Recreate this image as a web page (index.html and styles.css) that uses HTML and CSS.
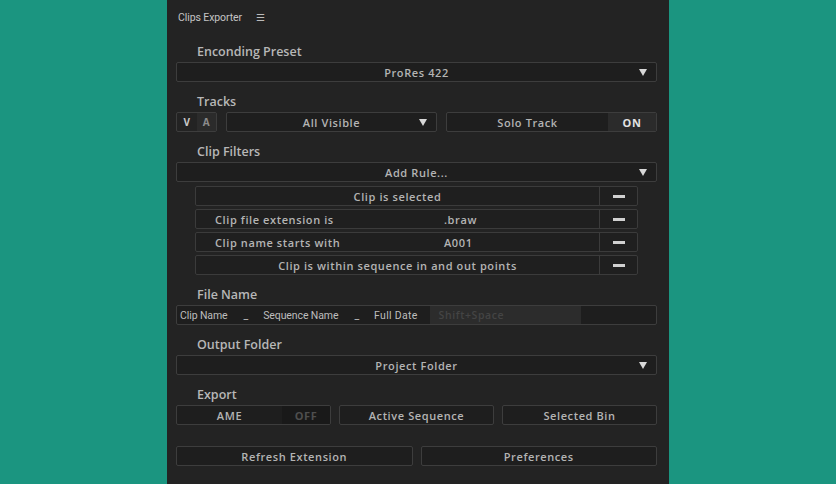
FILE: index.html
```
<!DOCTYPE html>
<html lang="en">
	<head>
		<meta charset="UTF-8" />
		<meta name="viewport" content="width=device-width, initial-scale=1.0" />
		<title>Clips Exporter</title>
		<link rel="stylesheet" href="styles.css">
	</head>
	<body>
		<div class="panel">
			<div class="title-bar">
				<span class="title">Clips Exporter</span>
				<span class="menu">&#9776;</span>
			</div>

			<div class="label">Enconding Preset</div>
			<div class="field select">
				<span class="value">ProRes 422</span>
				<span class="arrow"></span>
			</div>

			<div class="label">Tracks</div>
			<div class="row tracks">
				<div class="va">
					<span class="v">V</span>
					<span class="a">A</span>
				</div>
				<div class="field select visible">
					<span class="value">All Visible</span>
					<span class="arrow"></span>
				</div>
				<div class="field toggle solo">
					<span class="toggle-name">Solo Track</span>
					<span class="toggle-on">ON</span>
				</div>
			</div>

			<div class="label">Clip Filters</div>
			<div class="field select">
				<span class="value">Add Rule...</span>
				<span class="arrow"></span>
			</div>
			<div class="filters">
				<div class="filter">
					<span class="filter-text center">Clip is selected</span>
					<span class="remove"><i></i></span>
				</div>
				<div class="filter">
					<span class="filter-text"><span class="rule">Clip file extension is</span><span class="param">.braw</span></span>
					<span class="remove"><i></i></span>
				</div>
				<div class="filter">
					<span class="filter-text"><span class="rule">Clip name starts with</span><span class="param">A001</span></span>
					<span class="remove"><i></i></span>
				</div>
				<div class="filter">
					<span class="filter-text center">Clip is within sequence in and out points</span>
					<span class="remove"><i></i></span>
				</div>
			</div>

			<div class="label">File Name</div>
			<div class="field filename">
				<span class="token">Clip Name</span>
				<span class="sep">_</span>
				<span class="token">Sequence Name</span>
				<span class="sep">_</span>
				<span class="token last">Full Date</span>
				<span class="hint">Shift+Space</span>
			</div>

			<div class="label">Output Folder</div>
			<div class="field select">
				<span class="value">Project Folder</span>
				<span class="arrow"></span>
			</div>

			<div class="label">Export</div>
			<div class="row thirds">
				<div class="field toggle">
					<span class="toggle-name">AME</span>
					<span class="toggle-off">OFF</span>
				</div>
				<div class="field button">Active Sequence</div>
				<div class="field button">Selected Bin</div>
			</div>

			<div class="row halves">
				<div class="field button">Refresh Extension</div>
				<div class="field button">Preferences</div>
			</div>
		</div>
	</body>
</html>
```

FILE: styles.css
```
body {
	margin: 0;
	background-color: #1b9580; /* teal backdrop */
	font-family: "Open Sans", "DejaVu Sans", sans-serif;
}
.panel {
	width: 481px;
	height: 484px;
	margin-left: 167px;
	padding: 0 12px 0 9px;
	background-color: #232323;
	color: #b4b4b4;
}
.title-bar {
	height: 34px;
	display: flex;
	align-items: center;
	gap: 14px;
	padding-left: 2px;
}
.title {
	font-family: Roboto, sans-serif;
	font-size: 10.5px;
	letter-spacing: -0.1px;
	color: #c4c4c4;
}
.menu {
	font-size: 10px;
	color: #bbb;
}
.label {
	height: 20px;
	line-height: 20px;
	margin-top: 10px;
	padding-left: 21px;
	font-size: 12.5px;
	font-weight: 600;
	color: #b7b7b7;
}
.title-bar + .label {
	margin-top: 8px;
}
.field {
	box-sizing: border-box;
	height: 20px;
	border: 1px solid #3d3d3d;
	border-radius: 2px;
	background-color: #1e1e1e;
	font-size: 11px;
	font-weight: 600;
	letter-spacing: 0.6px;
	color: #b4b4b4;
	display: flex;
	align-items: center;
}
.select {
	position: relative;
	justify-content: center;
}
.arrow {
	position: absolute;
	right: 9px;
	top: 6px;
	width: 0;
	height: 0;
	border-left: 4px solid transparent;
	border-right: 4px solid transparent;
	border-top: 7px solid #d8d8d8;
}
.row {
	display: flex;
	gap: 8px;
}
.tracks {
	gap: 0;
}
.va {
	box-sizing: border-box;
	width: 41px;
	height: 20px;
	display: flex;
	border: 1px solid #3d3d3d;
	border-radius: 2px;
	font-size: 10px;
	font-weight: 700;
	color: #c9c9c9;
}
.va span {
	flex: 1;
	display: flex;
	align-items: center;
	justify-content: center;
}
.va .a {
	background-color: #2b2b2b;
	color: #8c8c8c;
}
.visible {
	width: 211px;
	margin-left: 9px;
}
.solo {
	flex: 1;
	margin-left: 9px;
}
.toggle {
	overflow: hidden;
}
.toggle-name {
	flex: 1;
	text-align: center;
}
.toggle-on,
.toggle-off {
	width: 48px;
	height: 100%;
	display: flex;
	align-items: center;
	justify-content: center;
	font-weight: 700;
}
.toggle-on {
	background-color: #2b2b2b;
	color: #e2e2e2;
}
.toggle-off {
	background-color: #191919;
	color: #4e4e4e;
}
.filters {
	display: flex;
	flex-direction: column;
	gap: 3px;
	margin: 4px 19px 0 19px;
}
.filter {
	box-sizing: border-box;
	height: 20px;
	display: flex;
	border: 1px solid #3b3b3b;
	border-radius: 2px;
	background-color: #1f1f1f;
	font-size: 11px;
	font-weight: 600;
	letter-spacing: 0.6px;
}
.filter-text {
	flex: 1;
	display: flex;
	align-items: center;
	padding-left: 19px;
}
.filter-text.center {
	justify-content: center;
	padding-left: 0;
}
.rule {
	width: 229px;
}
.remove {
	width: 37px;
	border-left: 1px solid #3b3b3b;
	display: flex;
	align-items: center;
	justify-content: center;
}
.remove i {
	width: 12px;
	height: 3px;
	background-color: #d0d0d0;
}
.filename {
	padding-left: 3px;
	font-family: Roboto, sans-serif;
	font-weight: 400;
	font-size: 10.5px;
	letter-spacing: -0.1px;
	color: #bdbdbd;
}
.token {
	margin-right: 16px;
}
.token.last {
	margin-right: 12px;
	letter-spacing: 0.3px;
}
.sep {
	margin-right: 15px;
}
.hint {
	box-sizing: border-box;
	width: 151px;
	height: 100%;
	padding-left: 9px;
	display: flex;
	align-items: center;
	background-color: #2c2c2c;
	font-family: "Open Sans", sans-serif;
	font-weight: 600;
	letter-spacing: 0.6px;
	color: #444;
}
.thirds > .field {
	flex: 1;
}
.button {
	justify-content: center;
}
.halves {
	margin-top: 21px;
}
.halves > .field {
	flex: 1;
}
```
